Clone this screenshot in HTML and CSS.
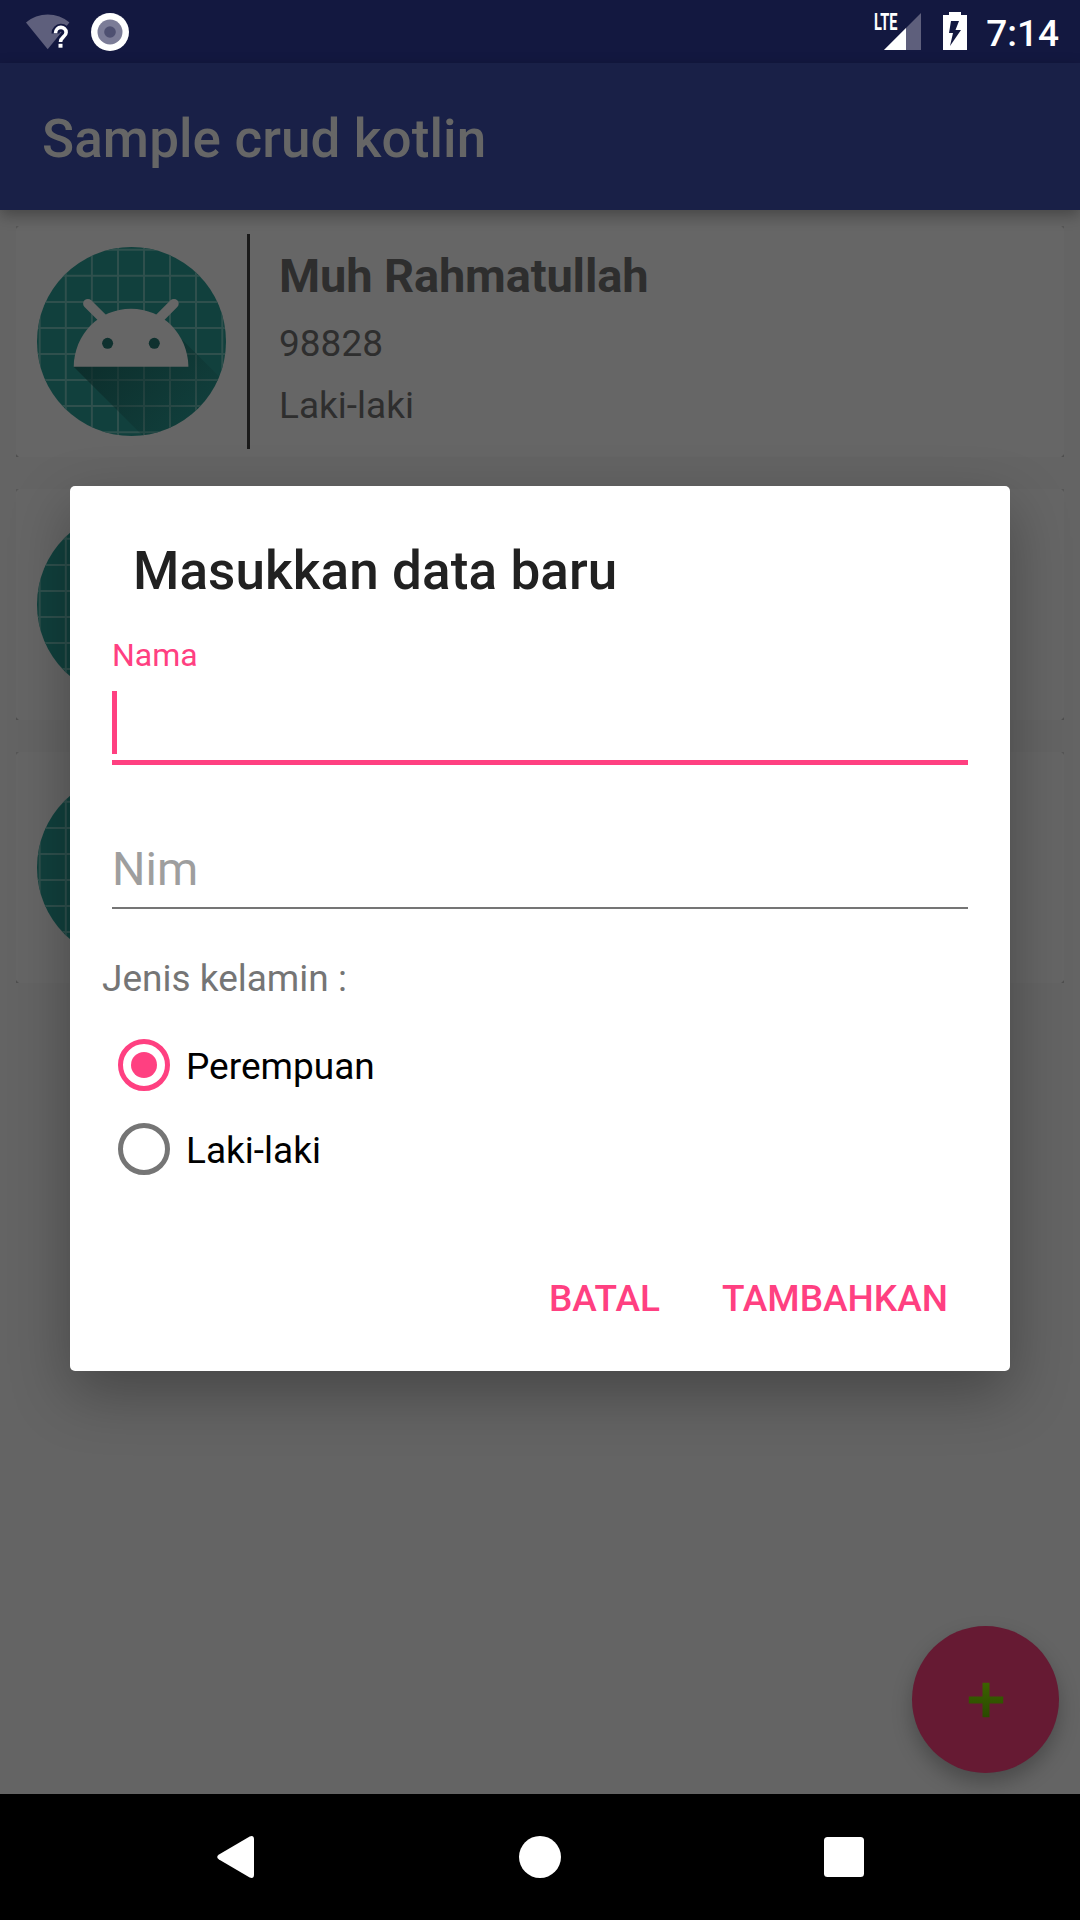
FILE: index.html
```html
<!DOCTYPE html>
<html lang="id">
<head>
<meta charset="utf-8">
<title>Sample crud kotlin</title>
<link rel="stylesheet" href="styles.css">
</head>
<body>
<svg width="0" height="0" class="defs" aria-hidden="true">
  <defs>
    <clipPath id="disc"><circle cx="94.5" cy="94.5" r="94.5"/></clipPath>
    <linearGradient id="fade" gradientUnits="userSpaceOnUse" x1="50" y1="75" x2="150" y2="175">
      <stop offset="0" stop-color="#0b2826" stop-opacity=".9"/>
      <stop offset="1" stop-color="#0b2826" stop-opacity=".1"/>
    </linearGradient>
    <linearGradient id="green" x1="0" y1="0" x2="0" y2="1">
      <stop offset="0" stop-color="#3c6200"/>
      <stop offset="1" stop-color="#2a4a00"/>
    </linearGradient>
    <symbol id="droid" viewBox="0 0 189 189">
      <g clip-path="url(#disc)">
        <rect width="189" height="189" fill="#11403d"/>
        <path fill="none" stroke="#2f504d" stroke-width="2" d="M2.7 0v189M28.8 0v189M54.9 0v189M81 0v189M107 0v189M133 0v189M159 0v189M185.3 0v189M0 2.7h189M0 28.8h189M0 54.9h189M0 81h189M0 107h189M0 133h189M0 159h189M0 185.3h189"/>
        <path fill="url(#fade)" d="M36.7 119.7 139 222h92V178.500L141 88.500 90 80z"/>
      </g>
      <path fill="none" stroke="#666" stroke-width="9.600" stroke-linecap="round" d="M50.900 56.700 66 71.600M136.900 56.700 122 71.600"/>
      <path fill="#666" d="M36.700 119.700C37 88 61.500 61.700 94 61.700s57 26.300 57.400 58z"/>
      <circle cx="70.600" cy="96.300" r="5.500" fill="#0f312f"/>
      <circle cx="117.300" cy="96.300" r="5.500" fill="#0f312f"/>
    </symbol>
  </defs>
</svg>
<div class="phone">
  <header class="status">
    <svg class="wifi" width="46" height="40" viewBox="0 0 46 40">
      <path fill="#5e5f7c" d="M0 8.600C12-2.300 31.500-2.300 43.400 8.600L21.700 35.300z"/>
      <path d="M29.500 19.500c0-7.500 10.600-7.500 10.600-.7 0 4.500-5.600 4.600-5.600 9.700v5" fill="none" stroke="#131840" stroke-width="8"/>
      <path d="M29.500 19.300c0-7.700 10.600-7.700 10.600-.9 0 4.500-5.600 4.600-5.600 9.600" fill="none" stroke="#fff" stroke-width="3.600"/>
      <rect x="32.500" y="29.800" width="4" height="3.900" fill="#fff"/>
    </svg>
    <svg class="record" width="38" height="38" viewBox="0 0 38 38">
      <circle cx="19" cy="19" r="19" fill="#fff"/>
      <circle cx="19" cy="19" r="12.500" fill="#7b7c97"/>
      <circle cx="19" cy="19" r="5.800" fill="#4e5071"/>
    </svg>
    <span class="spacer"></span>
    <div class="signal">
      <svg width="37" height="37" viewBox="0 0 37 37">
        <path fill="#5e5f7c" d="M37 0v37H0z"/>
        <path fill="#fff" d="M22 15v22H0z"/>
      </svg>
      <span class="lte">LTE</span>
    </div>
    <svg class="battery" width="24" height="38" viewBox="0 0 24 38">
      <path fill="#fff" fill-rule="evenodd" d="M6 0h12v3h6v35H0V3h6zM8 9 6 21h4L7 34 18 18h-5.500L16 9z"/>
    </svg>
    <time class="clock">7:14</time>
  </header>
  <header class="toolbar"><h1>Sample crud kotlin</h1></header>
  <main class="list">
    <article class="card">
      <svg class="avatar"><use href="#droid"/></svg>
      <div class="info">
        <h2>Muh Rahmatullah</h2>
        <p>98828</p>
        <p>Laki-laki</p>
      </div>
    </article>
    <article class="card"><svg class="avatar"><use href="#droid"/></svg></article>
    <article class="card"><svg class="avatar"><use href="#droid"/></svg></article>
    <div class="fab">
      <svg width="36" height="36" viewBox="0 0 36 36"><path fill="url(#green)" d="M14.500.800h7v13.700h13.700v7H21.500v13.700h-7V21.500H.800v-7h13.700z"/></svg>
    </div>
  </main>
  <nav class="navbar">
    <svg width="42" height="42" viewBox="0 0 42 42"><path fill="#fff" d="M4 18.500 34.700.500Q38.800-1 39 3v36q-.2 4-4.300 2.500L4 23.500q-3.600-2.500 0-5z"/></svg>
    <svg width="42" height="42" viewBox="0 0 42 42"><circle cx="21" cy="21" r="21" fill="#fff"/></svg>
    <svg width="42" height="42" viewBox="0 0 42 42"><rect x="1" y="1" width="40" height="40" rx="3.500" fill="#fff"/></svg>
  </nav>
  <section class="dialog">
    <h2 class="heading">Masukkan data baru</h2>
    <div class="field focused">
      <label>Nama</label>
      <div class="caret"></div>
    </div>
    <div class="field empty">Nim</div>
    <p class="caption">Jenis kelamin :</p>
    <div class="option">
      <svg width="52" height="52" viewBox="0 0 52 52"><circle cx="26" cy="26" r="23.500" fill="none" stroke="#ff4081" stroke-width="5"/><circle cx="26" cy="26" r="13" fill="#ff4081"/></svg>
      <span>Perempuan</span>
    </div>
    <div class="option">
      <svg width="52" height="52" viewBox="0 0 52 52"><circle cx="26" cy="26" r="23.500" fill="none" stroke="#757575" stroke-width="5"/></svg>
      <span>Laki-laki</span>
    </div>
    <div class="actions"><span>BATAL</span><span>TAMBAHKAN</span></div>
  </section>
</div>
</body>
</html>
```
FILE: styles.css
```css
* { box-sizing: border-box; }
body, h1, h2, p { margin: 0; }
body { font-family: Roboto, sans-serif; font-size: 37px; }
svg { display: block; flex: none; }
.defs { position: absolute; }
.phone {
  position: relative;
  display: flex;
  flex-direction: column;
  width: 1080px;
  height: 1920px;
  overflow: hidden;
  background: #646464;
}
.status {
  display: flex;
  align-items: flex-start;
  height: 63px;
  padding: 12px 21px 0 26px;
  background: #131840;
}
.wifi { margin-top: 1.500px; }
.record { margin: .500px 0 0 19.300px; }
.spacer { flex: 1; }
.signal { position: relative; margin: 1px 22px 0 0; }
.lte {
  position: absolute;
  left: -10px;
  top: -3px;
  font-size: 23.500px;
  line-height: 24px;
  font-weight: 700;
  color: #fff;
  transform: scaleX(.62);
  transform-origin: left;
}
.battery { margin-right: 19px; }
.clock { line-height: 43px; font-weight: 500; color: #fff; }
.toolbar {
  display: flex;
  align-items: center;
  height: 147px;
  padding: 4px 42px 0;
  background: #192047;
  box-shadow: 0 5px 14px rgba(0, 0, 0, .3);
  z-index: 1;
}
.toolbar h1 { font-size: 53px; font-weight: 500; letter-spacing: .1px; color: #666; }
.list {
  position: relative;
  flex: 1;
  display: flex;
  flex-direction: column;
  gap: 32px;
  padding: 16px 16px 0;
}
.card {
  display: flex;
  height: 231px;
  padding: 8px 21px;
  background:
    linear-gradient(135deg, #575757 1.500px, transparent 2.500px) left top / 4px 4px no-repeat,
    linear-gradient(225deg, #575757 1.500px, transparent 2.500px) right top / 4px 4px no-repeat,
    linear-gradient(45deg, #505050 1.500px, transparent 2.500px) left bottom / 4px 4px no-repeat,
    linear-gradient(315deg, #505050 1.500px, transparent 2.500px) right bottom / 4px 4px no-repeat,
    #666;
}
.avatar { width: 189px; height: 189px; margin-top: 13px; }
.info {
  margin-left: 21px;
  height: 215px;
  padding: 12px 0 0 29px;
  border-left: 3px solid #1a1a1a;
  color: #2e2e2e;
}
.info h2 { margin-bottom: 7px; font-size: 47px; line-height: 60px; letter-spacing: -.14px; }
.info p { line-height: 62px; }
.fab {
  position: absolute;
  right: 21px;
  bottom: 21px;
  display: grid;
  place-items: center;
  width: 147px;
  height: 147px;
  border-radius: 50%;
  background: #661a33;
  box-shadow: 0 10px 20px rgba(0, 0, 0, .26);
}
.navbar {
  position: relative;
  display: flex;
  justify-content: space-between;
  align-items: center;
  height: 126px;
  padding: 0 215px;
  background: #000;
}
.dialog {
  position: absolute;
  left: 70px;
  top: 486px;
  z-index: 2;
  width: 940px;
  height: 885px;
  padding: 54px 42px 0;
  border-radius: 5px;
  background: #fff;
  box-shadow: 0 22px 60px rgba(0, 0, 0, .3);
}
.heading { padding-left: 21px; font-size: 53px; line-height: 62px; font-weight: 500; letter-spacing: .1px; color: #212121; }
.field.focused {
  height: 163px;
  padding-top: 35px;
  border-bottom: 5px solid #ff4081;
}
.focused label { display: block; height: 37px; font-size: 32px; line-height: 37px; color: #ff4081; }
.caret { width: 5px; height: 63px; margin-top: 17px; background: #ff4081; }
.field.empty {
  height: 144px;
  padding-top: 76px;
  border-bottom: 2px solid #757575;
  font-size: 47px;
  line-height: 56px;
  color: #9e9e9e;
}
.caption { margin: 48px 0 22px -10px; line-height: 44px; color: #757575; }
.option { display: flex; align-items: center; height: 84px; padding-left: 6px; gap: 16px; color: #000; }
.option span { padding-top: 2px; }
.actions {
  display: flex;
  justify-content: flex-end;
  gap: 62px;
  margin-top: 86px;
  padding-right: 20px;
  line-height: 44px;
  font-weight: 500;
  color: #ff4081;
}
```
